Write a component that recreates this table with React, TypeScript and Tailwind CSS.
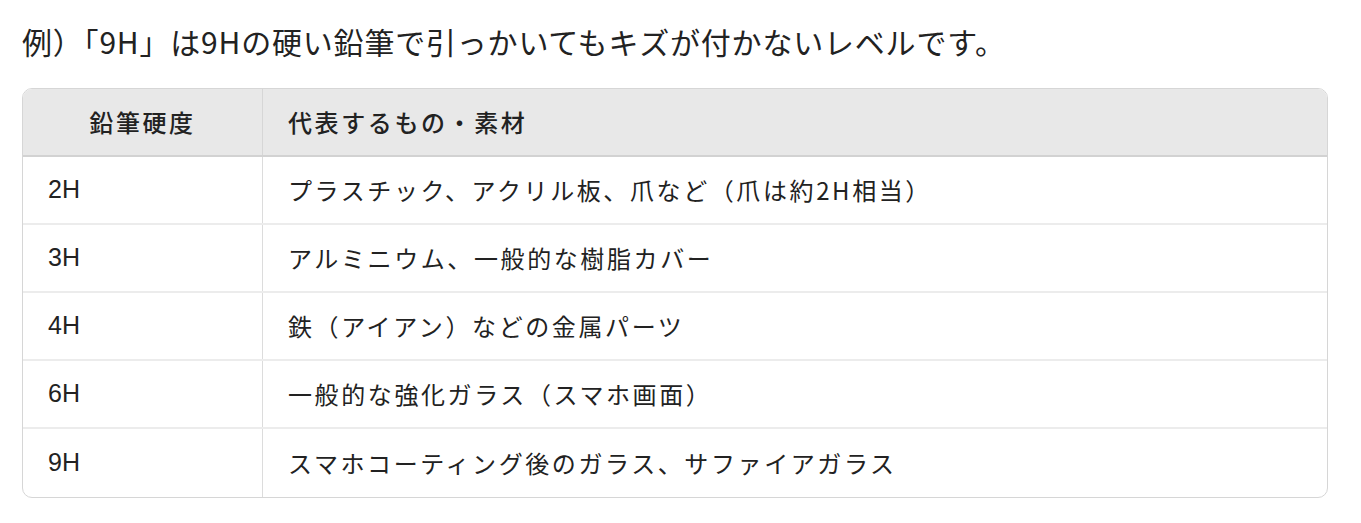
const rows: [string, string][] = [
  ["2H", "プラスチック、アクリル板、爪など（爪は約2H相当）"],
  ["3H", "アルミニウム、一般的な樹脂カバー"],
  ["4H", "鉄（アイアン）などの金属パーツ"],
  ["6H", "一般的な強化ガラス（スマホ画面）"],
  ["9H", "スマホコーティング後のガラス、サファイアガラス"],
];

export default function App() {
  return (
    <div
      className="w-[1361px] h-[523px] bg-white text-[#222] pl-[22px] pr-[33px] pt-[21px]"
      style={{ fontFamily: '"Noto Sans CJK JP", "Noto Sans", sans-serif' }}
    >
      <h1 className="text-[30px] leading-[40px] tracking-[0.8px]">
        例）「9H」は9Hの硬い鉛筆で引っかいてもキズが付かないレベルです。
      </h1>

      <div className="mt-[27px] rounded-[10px] border border-[#d6d6d6] overflow-hidden">
        <div className="flex h-[68px] bg-[#e8e8e8] border-b-2 border-[#d2d2d2] text-[24px] tracking-[2.6px] font-medium">
          <div className="w-[240px] shrink-0 flex items-center justify-center border-r border-[#d6d6d6]">
            鉛筆硬度
          </div>
          <div className="flex-1 flex items-center pl-[25px]">代表するもの・素材</div>
        </div>
        {rows.map(([grade, desc], i) => (
          <div
            key={grade}
            className={`flex h-[68px] text-[24px] tracking-[2.6px] ${
              i < rows.length - 1 ? "border-b-2 border-[#ececec]" : ""
            }`}
          >
            <div
              className="w-[240px] shrink-0 flex items-center pl-[25px] border-r border-[#dcdcdc] text-[25px] tracking-normal"
              style={{ fontFamily: '"Liberation Sans", Arial, sans-serif' }}
            >
              {grade}
            </div>
            <div className="flex-1 flex items-center pl-[25px]">{desc}</div>
          </div>
        ))}
      </div>
    </div>
  );
}
